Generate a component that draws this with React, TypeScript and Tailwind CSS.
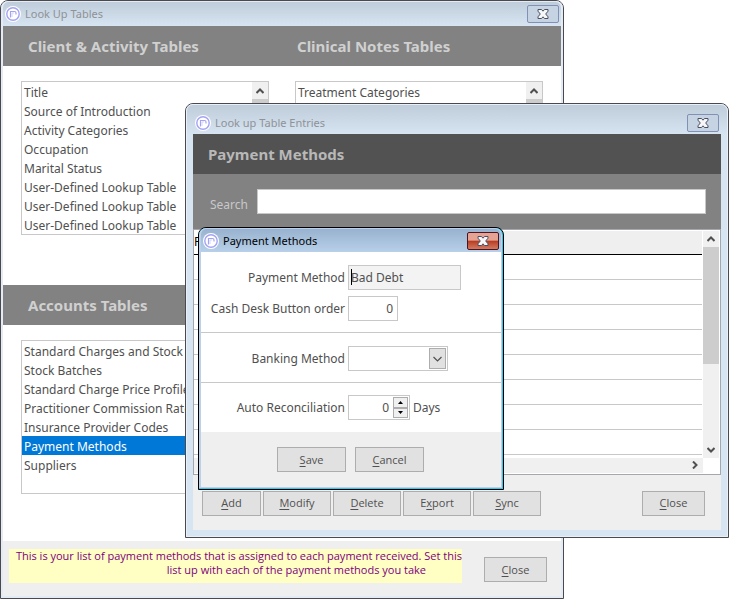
import React, { useState } from 'react';

const clientTables = [
  'Title',
  'Source of Introduction',
  'Activity Categories',
  'Occupation',
  'Marital Status',
  'User-Defined Lookup Table',
  'User-Defined Lookup Table',
  'User-Defined Lookup Table',
];

const accountsTables = [
  'Standard Charges and Stock',
  'Stock Batches',
  'Standard Charge Price Profiles',
  'Practitioner Commission Rates',
  'Insurance Provider Codes',
  'Payment Methods',
  'Suppliers',
];

function AppIcon() {
  return (
    <svg viewBox="0 0 16 16" className="w-4 h-4 shrink-0" aria-hidden="true">
      <circle cx="8" cy="8" r="8" fill="#fff" />
      <circle cx="8" cy="8" r="6.2" fill="none" stroke="#a3a3f4" strokeWidth="1.4" />
      <path d="M5.5 11.5V5.5H9.5a1.5 1.5 0 0 1 1.5 1.5v1.5" fill="none" stroke="#a3a3f4" strokeWidth="1.2" />
      <path d="M7 11V7H9" fill="none" stroke="#d5d5fb" strokeWidth="1" />
    </svg>
  );
}

function CloseGlyph() {
  return (
    <svg viewBox="0 0 12 10" className="w-3 h-[10px]" aria-hidden="true">
      <path
        d="M1 .5H4.5L6 2.2L7.5 .5H11V2.2L8.7 5L11 7.8V9.5H7.5L6 7.8L4.5 9.5H1V7.8L3.3 5L1 2.2Z"
        fill="#f7f7f7"
        stroke="#4a4f63"
        strokeWidth="1"
      />
    </svg>
  );
}

function Chevron({ className }: { className?: string }) {
  return (
    <svg viewBox="0 0 8 6" className={`w-2 h-[6px] ${className || ''}`} aria-hidden="true">
      <path d="M0.5 5L4 1.5L7.5 5" fill="none" stroke="#505050" strokeWidth="2" />
    </svg>
  );
}

interface TitleBarProps {
  title: string;
  className: string;
  active?: boolean;
}

function TitleBar({ title, className, active }: TitleBarProps) {
  return (
    <div className={`flex items-center ${className}`}>
      <AppIcon />
      <span className={`flex-1 pl-1 text-[11px] leading-4 ${active ? 'text-black' : 'text-[#8f9296]'}`}>
        {title}
      </span>
      <button
        aria-label={`Close ${title}`}
        className={`flex items-center justify-center w-8 h-[18px] rounded-[2px] border ${
          active
            ? 'border-[#4f1420] bg-linear-to-b from-[#e5a493] from-45% via-[#b83a20] via-50% to-[#d07a60]'
            : 'border-[#8190b4] bg-[#c5d3e3]'
        }`}
      >
        <CloseGlyph />
      </button>
    </div>
  );
}

interface PushButtonProps {
  hotkey: string;
  before?: string;
  after: string;
  className: string;
  onClick?: () => void;
}

function PushButton({ hotkey, before, after, className, onClick }: PushButtonProps) {
  return (
    <button
      onClick={onClick}
      className={`h-[25px] border border-[#adadad] bg-[#e1e1e1] font-['Open_Sans',sans-serif] text-[11px] leading-4 text-[#505050] ${className}`}
    >
      {before}
      <span className="underline underline-offset-2">{hotkey}</span>
      {after}
    </button>
  );
}

interface ListBoxProps {
  label: string;
  items: string[];
  selected?: number;
  onSelect?: (index: number) => void;
  scroll?: boolean;
}

function ListBox({ label, items, selected, onSelect, scroll }: ListBoxProps) {
  return (
    <div className="flex min-h-[154px] border border-[#c8c8c8] bg-white">
      <ul role="listbox" aria-label={label} className="flex-1 min-w-0">
        {items.map((item, i) => (
          <li
            key={i}
            role="option"
            aria-selected={i === selected}
            onClick={() => onSelect && onSelect(i)}
            className={`h-[19px] pl-[2px] text-[12px] leading-[22px] whitespace-nowrap ${
              i === selected ? 'bg-[#0078d7] text-white' : 'text-[#505050]'
            }`}
          >
            {item}
          </li>
        ))}
      </ul>
      {scroll && (
        <div className="flex flex-col w-4 bg-[#f0f0f0]">
          <div className="flex items-center justify-center h-[17px]">
            <Chevron />
          </div>
          <div className="h-20 bg-[#cdcdcd]" />
        </div>
      )}
    </div>
  );
}

function SectionHeader({ titles }: { titles: string[] }) {
  return (
    <div className="grid grid-cols-2 items-center h-10 pl-5 bg-[#828282]">
      {titles.map((title) => (
        <h2 key={title} className="pl-[5px] text-[15px] leading-5 font-bold text-[#d0d0d0]">
          {title}
        </h2>
      ))}
    </div>
  );
}

function LookUpTablesWindow() {
  const [selected, setSelected] = useState(5);

  return (
    <section className="mr-[165px] rounded-t-lg border border-[#4b494e] bg-[#d7e4f2]">
      <div className="rounded-t-[7px] border-2 border-t border-[#e3ebf5] bg-linear-to-b from-[#bfcddb] to-[#d7e4f2] to-[24px]">
        <TitleBar title="Look Up Tables" className="h-6 pl-[2px] pr-[2px]" />
        <div className="bg-white">
          <SectionHeader titles={['Client & Activity Tables', 'Clinical Notes Tables']} />
          <div className="grid grid-cols-2 gap-[26px] px-[18px] pt-[15px] pb-[50px]">
            <ListBox label="Client & Activity Tables" items={clientTables} scroll />
            <ListBox label="Clinical Notes Tables" items={['Treatment Categories']} scroll />
          </div>
          <SectionHeader titles={['Accounts Tables']} />
          <div className="grid grid-cols-2 gap-[26px] px-[18px] pt-[15px] pb-[47px]">
            <ListBox label="Accounts Tables" items={accountsTables} selected={selected} onSelect={setSelected} />
          </div>
        </div>
        <footer className="flex items-start justify-between h-[55px] pt-2 pl-[6px] pr-[14px] bg-[#efefef]">
          <p className="w-[453px] h-[34px] bg-[#ffffc4] font-['Open_Sans',sans-serif] text-right text-[11px] leading-[14px] whitespace-nowrap text-[#800080]">
            This is your list of payment methods that is assigned to each payment received. Set this
            <span className="block pr-9">list up with each of the payment methods you take</span>
          </p>
          <PushButton hotkey="C" after="lose" className="w-[63px] mt-2" />
        </footer>
      </div>
    </section>
  );
}

function EntriesTable() {
  return (
    <div className="border border-[#a5a7ad] bg-white">
      <div className="flex pt-px pr-px">
        <table className="flex-1 table-fixed w-full border-collapse mr-px mb-[3px]">
          <thead>
            <tr className="h-[23px] border-b border-black">
              <th className="w-1 p-0 text-left text-[12px] leading-4 font-normal text-black">P</th>
              <th className="p-0 bg-[#efefef]" />
            </tr>
          </thead>
          <tbody>
            {Array.from({ length: 8 }, (_, i) => (
              <tr key={i} className="h-[25px] border-b border-[#c8c8c8]">
                <td className="p-0" />
                <td className="p-0" />
              </tr>
            ))}
          </tbody>
        </table>
        <div className="flex flex-col w-4 shrink-0 bg-[#f0f0f0]">
          <div className="flex items-center justify-center h-4">
            <Chevron />
          </div>
          <div className="h-[117px] bg-[#cdcdcd]" />
          <div className="flex items-center justify-center h-4 mt-auto">
            <Chevron className="rotate-180" />
          </div>
        </div>
      </div>
      <div className="flex items-center justify-end h-[15px] mr-[17px] mb-px pr-1 bg-[#f0f0f0]">
        <Chevron className="rotate-90" />
      </div>
    </div>
  );
}

function EntriesWindow() {
  return (
    <section className="absolute top-[103px] left-[185px] right-0 rounded-t-lg border border-[#4b494e] bg-[#d7e4f2]">
      <div className="rounded-t-[7px] border border-[#e9f0f8] bg-linear-to-b from-[#bfcddb] to-[#d7e4f2] to-[30px] px-[6px] pb-[6px]">
        <TitleBar title="Look up Table Entries" className="h-[29px] pl-[2px] pr-[2px] pt-[7px]" />
        <div className="flex items-center h-10 pl-[15px] bg-[#525252]">
          <h2 className="text-[15px] leading-5 font-bold text-[#b8b8b8]">Payment Methods</h2>
        </div>
        <div className="flex items-start h-[55px] pt-[15px] pl-[17px] pr-[15px] bg-[#828282]">
          <label htmlFor="search" className="w-[47px] pt-[6px] text-[12px] leading-5 text-[#c8c8c8]">
            Search
          </label>
          <input id="search" type="text" className="flex-1 min-w-0 h-[25px] border border-[#c8c8c8] bg-white px-1 text-[12px]" />
        </div>
        <EntriesTable />
        <footer className="flex justify-between h-[55px] pt-4 pl-[9px] pr-4 bg-[#efefef]">
          <div className="flex gap-[2px]">
            <PushButton hotkey="A" after="dd" className="w-[59px]" />
            <PushButton hotkey="M" after="odify" className="w-[68px]" />
            <PushButton hotkey="D" after="elete" className="w-[68px]" />
            <PushButton before="E" hotkey="x" after="port" className="w-[68px]" />
            <PushButton hotkey="S" after="ync" className="w-[68px]" />
          </div>
          <PushButton hotkey="C" after="lose" className="w-[63px]" />
        </footer>
      </div>
    </section>
  );
}

const fieldLabel = 'w-36 shrink-0 text-right text-[12px] leading-5 whitespace-nowrap';
const field = 'block h-[25px] border border-[#c8c8c8] px-[2px] text-[12px] leading-5';

function PaymentMethodDialog() {
  const [days, setDays] = useState(0);

  return (
    <section
      role="dialog"
      aria-label="Payment Methods"
      className="absolute top-[227px] left-[198px] w-[306px] rounded-t-lg border border-black bg-[#35c8e8]"
    >
      <div className="rounded-t-[7px] mr-px mb-px border-l-2 border-t border-r border-b border-[#b9d1ea] bg-linear-to-b from-[#98b2cf] to-[#b9d1ea] to-[24px]">
        <TitleBar title="Payment Methods" className="h-[23px] pl-[2px] pr-[2px]" active />
        <div className="bg-white text-[#505050]">
          <div className="flex flex-col gap-[6px] pt-[13px] pb-[11px] border-b border-[#c8c8c8]">
            <div className="flex items-center gap-[3px]">
              <label htmlFor="method" className={fieldLabel}>Payment Method</label>
              <div className="relative">
                <input id="method" type="text" readOnly value="Bad Debt" className={`${field} w-[113px] bg-[#f3f3f3]`} />
                <span className="absolute left-[3px] top-1 w-px h-4 bg-black" />
              </div>
            </div>
            <div className="flex items-center gap-[3px]">
              <label htmlFor="order" className={fieldLabel}>Cash Desk Button order</label>
              <input id="order" type="text" defaultValue="0" className={`${field} w-[50px] pr-1 text-right bg-white`} />
            </div>
          </div>
          <div className="flex items-center gap-[3px] pt-[13px] pb-[11px] border-b border-[#c8c8c8]">
            <label htmlFor="banking" className={fieldLabel}>Banking Method</label>
            <div className="relative">
              <select id="banking" className={`${field} w-[100px] appearance-none bg-white`}>
                <option></option>
              </select>
              <span className="absolute right-[2px] top-[2px] flex items-center justify-center w-[17px] h-[21px] border border-[#adadad] bg-[#e1e1e1] pointer-events-none">
                <svg viewBox="0 0 9 6" className="w-[9px] h-[6px]" aria-hidden="true">
                  <path d="M0.5 1L4.5 5L8.5 1" fill="none" stroke="#505050" strokeWidth="1.2" />
                </svg>
              </span>
            </div>
          </div>
          <div className="flex items-center gap-[3px] pt-3 pb-3">
            <label htmlFor="days" className={fieldLabel}>Auto Reconciliation</label>
            <div className="flex h-[25px] w-[62px] border border-[#c8c8c8] bg-white py-px pr-px">
              <input
                id="days"
                type="text"
                value={days}
                onChange={(e) => setDays(Number(e.target.value) || 0)}
                className="flex-1 min-w-0 pr-1 text-right text-[12px] leading-5"
              />
              <div className="flex flex-col w-[15px]">
                <button aria-label="More days" onClick={() => setDays(days + 1)} className="flex flex-1 items-center justify-center border border-[#adadad] bg-[#f0f0f0]">
                  <svg viewBox="0 0 5 3" className="w-[5px] h-[3px]"><path d="M0 3L2.5 0L5 3Z" fill="#000" /></svg>
                </button>
                <button aria-label="Fewer days" onClick={() => setDays(Math.max(0, days - 1))} className="flex flex-1 items-center justify-center border border-[#adadad] bg-[#f0f0f0]">
                  <svg viewBox="0 0 5 3" className="w-[5px] h-[3px]"><path d="M0 0L2.5 3L5 0Z" fill="#000" /></svg>
                </button>
              </div>
            </div>
            <span className="text-[12px] leading-5">Days</span>
          </div>
        </div>
        <footer className="flex items-start gap-[9px] h-[55px] pt-[15px] pl-[76px] bg-[#efefef]">
          <PushButton hotkey="S" after="ave" className="w-[69px]" />
          <PushButton hotkey="C" after="ancel" className="w-[69px]" />
        </footer>
      </div>
    </section>
  );
}

function App() {
  return (
    <main className="relative min-h-screen bg-white font-['Noto_Sans',sans-serif]">
      <LookUpTablesWindow />
      <EntriesWindow />
      <PaymentMethodDialog />
    </main>
  );
}

export default App;
